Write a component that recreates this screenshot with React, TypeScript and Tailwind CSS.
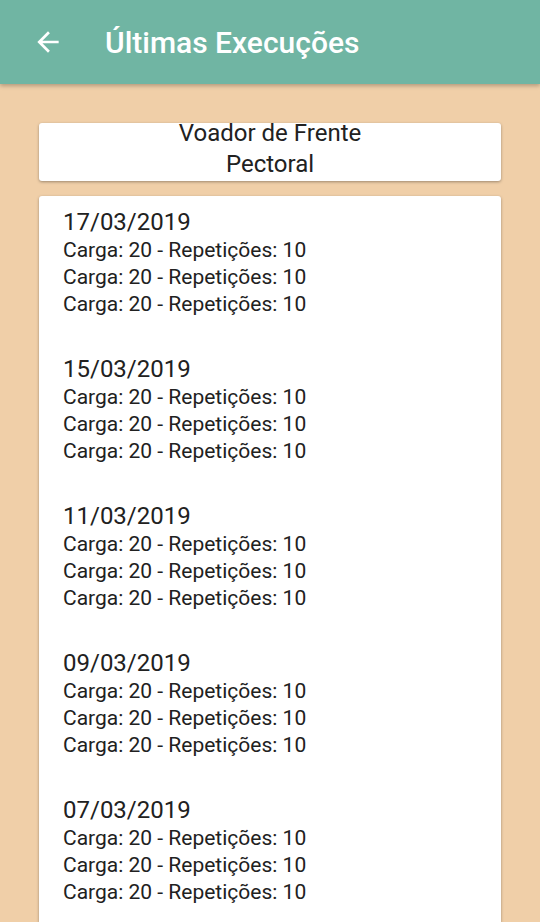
import React from "react";

const executions = [
  "17/03/2019",
  "15/03/2019",
  "11/03/2019",
  "09/03/2019",
  "07/03/2019",
];

const sets = [
  { carga: 20, reps: 10 },
  { carga: 20, reps: 10 },
  { carga: 20, reps: 10 },
];

export default function App() {
  return (
    <div
      className="h-[922px] w-[540px] overflow-hidden bg-[#f0cfa8] flex flex-col"
      style={{ fontFamily: "Roboto, 'Noto Sans', sans-serif" }}
    >
      <header className="h-[84px] shrink-0 bg-[#70b5a3] flex items-center shadow-[0_2px_4px_rgba(0,0,0,0.25)] z-10">
        <button className="ml-[32px] w-[32px] h-[32px] flex items-center justify-center text-white">
          <svg width="32" height="32" viewBox="0 0 24 24" fill="none">
            <path
              d="M20 11H7.83l5.59-5.59L12 4l-8 8 8 8 1.41-1.41L7.83 13H20v-2z"
              fill="white"
            />
          </svg>
        </button>
        <h1 className="ml-[41px] text-white text-[30px] font-medium">
          Últimas Execuções
        </h1>
      </header>

      <main className="flex flex-col px-[39px] pt-[39px] gap-[15px] flex-1 min-h-0">
        <div className="bg-white rounded-[3px] shadow-[0_1px_3px_rgba(0,0,0,0.35)] h-[58px] shrink-0 overflow-hidden flex flex-col items-center text-[24px] leading-[31px] text-[#212121]">
          <span className="-mt-[5px]">Voador de Frente</span>
          <span>Pectoral</span>
        </div>

        <div className="bg-white rounded-t-[3px] shadow-[0_1px_3px_rgba(0,0,0,0.35)] px-[24px] pt-[13px] flex flex-col gap-[38px] flex-1">
          {executions.map((date) => (
            <div key={date} className="flex flex-col text-[#212121]">
              <div className="text-[24px] leading-[26px] mb-[2px]">{date}</div>
              {sets.map((s, i) => (
                <div key={i} className="text-[21px] leading-[27px]">
                  Carga: {s.carga} - Repetições: {s.reps}
                </div>
              ))}
            </div>
          ))}
        </div>
      </main>
    </div>
  );
}
